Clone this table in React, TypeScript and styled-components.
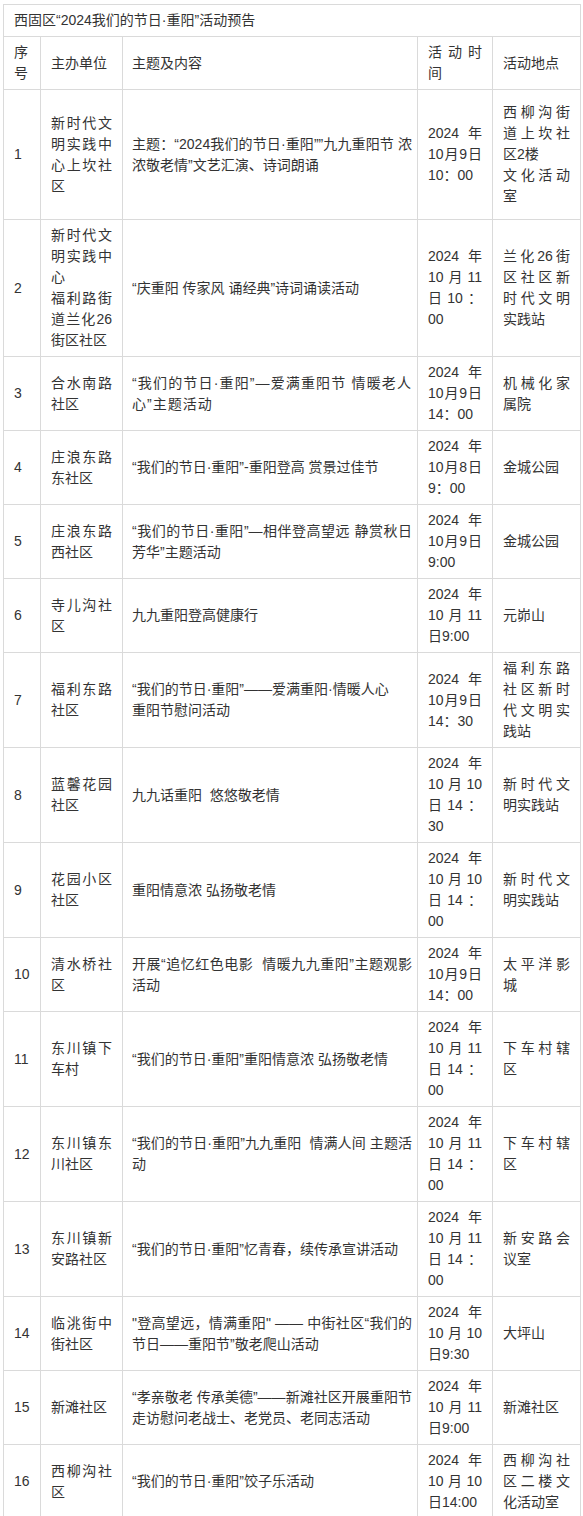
import React from 'react';
import styled, { createGlobalStyle } from 'styled-components';

const GlobalStyle = createGlobalStyle`
  html, body {
    margin: 0;
    padding: 0;
    background: #fff;
  }
  body {
    font-family: "Liberation Sans", "Noto Sans CJK SC", sans-serif;
    color: #333;
  }
`;

type Item = {
    no: number;
    org: React.ReactNode;
    topic: React.ReactNode;
    time: string;
    place: React.ReactNode;
    h?: number;
    spread?: boolean;
};

const items: Item[] = [
    {
        no: 1,
        org: '新时代文明实践中心上坎社区',
        topic: '主题：“2024我们的节日·重阳””九九重阳节 浓浓敬老情”文艺汇演、诗词朗诵',
        time: '2024年10月9日10：00',
        place: <>西柳沟街道上坎社区2楼<br />文化活动室</>,
        h: 130,
    },
    {
        no: 2,
        org: <>新时代文明实践中心<br />福利路街道兰化26街区社区</>,
        topic: '“庆重阳 传家风 诵经典”诗词诵读活动',
        time: '2024年10月11日10：00',
        place: '兰化26街区社区新时代文明实践站',
    },
    {
        no: 3,
        org: '合水南路社区',
        topic: '“我们的节日·重阳”—爱满重阳节 情暖老人心”主题活动',
        time: '2024年10月9日14：00',
        place: '机械化家属院',
        spread: true,
    },
    {
        no: 4,
        org: '庄浪东路东社区',
        topic: '“我们的节日·重阳”-重阳登高 赏景过佳节',
        time: '2024年10月8日9：00',
        place: '金城公园',
    },
    {
        no: 5,
        org: '庄浪东路西社区',
        topic: '“我们的节日·重阳”—相伴登高望远 静赏秋日芳华”主题活动',
        time: '2024年10月9日9:00',
        place: '金城公园',
    },
    {
        no: 6,
        org: '寺儿沟社区',
        topic: '九九重阳登高健康行',
        time: '2024年10月11日9:00',
        place: '元峁山',
    },
    {
        no: 7,
        org: '福利东路社区',
        topic: <>“我们的节日·重阳”——爱满重阳·情暖人心<br />重阳节慰问活动</>,
        time: '2024年10月9日14：30',
        place: '福利东路社区新时代文明实践站',
    },
    {
        no: 8,
        org: '蓝馨花园社区',
        topic: '九九话重阳\u00a0 悠悠敬老情',
        time: '2024年10月10日14：30',
        place: '新时代文明实践站',
    },
    {
        no: 9,
        org: '花园小区社区',
        topic: '重阳情意浓 弘扬敬老情',
        time: '2024年10月10日14：00',
        place: '新时代文明实践站',
    },
    {
        no: 10,
        org: '清水桥社区',
        topic: '开展“追忆红色电影\u00a0 情暖九九重阳”主题观影活动',
        time: '2024年10月9日14：00',
        place: '太平洋影城',
    },
    {
        no: 11,
        org: '东川镇下车村',
        topic: '“我们的节日·重阳”重阳情意浓 弘扬敬老情',
        time: '2024年10月11日14：00',
        place: '下车村辖区',
    },
    {
        no: 12,
        org: '东川镇东川社区',
        topic: '“我们的节日·重阳”九九重阳\u00a0 情满人间 主题活动',
        time: '2024年10月11日14：00',
        place: '下车村辖区',
    },
    {
        no: 13,
        org: '东川镇新安路社区',
        topic: '“我们的节日·重阳”忆青春，续传承宣讲活动',
        time: '2024年10月11日14：00',
        place: '新安路会议室',
    },
    {
        no: 14,
        org: '临洮街中街社区',
        topic: '"登高望远，情满重阳" —— 中街社区“我们的节日——重阳节”敬老爬山活动',
        time: '2024年10月10日9:30',
        place: '大坪山',
    },
    {
        no: 15,
        org: '新滩社区',
        topic: '“孝亲敬老 传承美德”——新滩社区开展重阳节走访慰问老战士、老党员、老同志活动',
        time: '2024年10月11日9:00',
        place: '新滩社区',
    },
    {
        no: 16,
        org: '西柳沟社区',
        topic: '“我们的节日·重阳”饺子乐活动',
        time: '2024年10月10日14:00',
        place: '西柳沟社区二楼文化活动室',
    },
];

export default function App() {
    return (
        <Page lang="zh-CN">
            <GlobalStyle />
            <Table>
                <colgroup>
                    <col style={{ width: 37 }} />
                    <col style={{ width: 82 }} />
                    <col style={{ width: 295 }} />
                    <col style={{ width: 75 }} />
                    <col style={{ width: 88 }} />
                </colgroup>
                <tbody>
                    <Row>
                        <Cell colSpan={5}>西固区“2024我们的节日·重阳”活动预告</Cell>
                    </Row>
                    <Row>
                        <Cell>序号</Cell>
                        <Cell>主办单位</Cell>
                        <TopicCell>主题及内容</TopicCell>
                        <Cell>活动时间</Cell>
                        <Cell>活动地点</Cell>
                    </Row>
                    {items.map((it) => (
                        <Row key={it.no} $h={it.h}>
                            <Cell>{it.no}</Cell>
                            <Cell>{it.org}</Cell>
                            <TopicCell $spread={it.spread}>{it.topic}</TopicCell>
                            <Cell>{it.time}</Cell>
                            <Cell>{it.place}</Cell>
                        </Row>
                    ))}
                </tbody>
            </Table>
        </Page>
    );
}

const Page = styled.div`
    padding: 4px 3px 0 3px;
    background: #fff;
`;

const Table = styled.table`
    width: 577px;
    table-layout: fixed;
    border-collapse: collapse;
    font-size: 14px;
    line-height: 21px;
`;

const Row = styled.tr<{ $h?: number }>`
    height: ${(p) => (p.$h ? `${p.$h}px` : 'auto')};
`;

const Cell = styled.td`
    border: 1px solid #dadada;
    padding: 5px 10px;
    vertical-align: middle;
    text-align: justify;
    word-break: normal;
    text-spacing-trim: space-all;
`;

const TopicCell = styled(Cell)<{ $spread?: boolean }>`
    padding: 5px 5px 5px 9px;
    letter-spacing: ${(p) => (p.$spread ? '1px' : 'normal')};
`;
